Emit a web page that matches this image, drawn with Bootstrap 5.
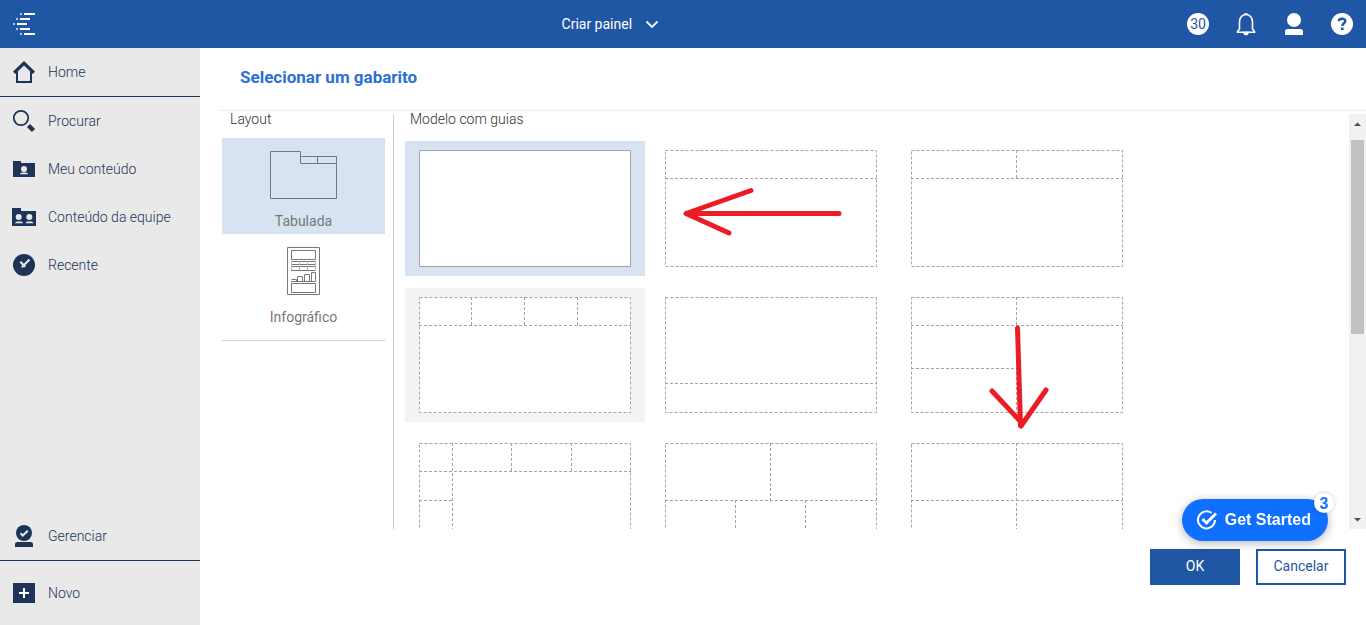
<!DOCTYPE html>
<html lang="pt-BR">
<head>
<meta charset="utf-8">
<meta name="viewport" content="width=device-width, initial-scale=1">
<title>Criar painel</title>
<link href="https://cdn.jsdelivr.net/npm/bootstrap@5.3.0/dist/css/bootstrap.min.css" rel="stylesheet">
<style>
  :root { --brand: #1f57a4; --ink: #1d3458; --pick: #d8e3f1; --line: #a3a3a3; }
  body { font-family: Roboto, "Noto Sans", sans-serif; font-size: 14px; font-weight: 300; line-height: 20px; color: #323232; }
  svg { display: block; flex: none; }
  .topbar { height: 48px; background: var(--brand); display: grid; grid-template-columns: 4fr auto 5fr; }
  .topbar button, .thumb, .layout-item { border: 0; background: none; padding: 0; }
  .brand-mark { width: 32px; }
  .menu-label { font-weight: 400; }
  .tools { padding-right: 12px; }
  .topbar .count { width: 22px; height: 22px; margin-right: 1px; background: #fff; color: var(--brand); }
  .side { width: 200px; background: #e9e9e9; }
  .side a { height: 48px; padding: 0 12px; gap: 12px; color: var(--ink); text-decoration: none; }
  .side .rule-below { height: 49px; border-bottom: 1px solid var(--ink); }
  .side .new-item { height: 64px; }
  .page-title { font-size: 17px; line-height: 24px; font-weight: 700; color: #2a70d6; padding: 17px 0 21px; margin: 0 0 0 20px; }
  .title-box { border-bottom: 1px solid #ececec; margin-left: 20px; }
  .picker { margin: 3px 0 0 22px; min-height: 0; }
  .layouts { width: 172px; border-right: 1px solid #d0d0d0; padding-right: 8px; }
  .col-label { line-height: 16px; margin: -3px 0 0; }
  .layouts .col-label { padding-left: 8px; margin-bottom: 11px; }
  .layout-item { height: 96px; width: 100%; color: #777; padding: 12px 0 3px; }
  .layout-item.chosen { background: var(--pick); }
  .layout-list { padding-bottom: 10px; border-bottom: 1px solid #d0d0d0; }
  .models { padding-left: 11px; }
  .models .col-label { padding-left: 5px; margin-bottom: 14px; }
  .thumb-grid { display: grid; grid-template-columns: repeat(auto-fill, 240px); gap: 12px 6px; position: relative; max-width: 744px; }
  .thumb { padding: 9px 14px; align-self: start; }
  .thumb svg { background: #fff; fill: none; stroke: var(--line); stroke-dasharray: 3 2; }
  .thumb.chosen { background: var(--pick); }
  .thumb.chosen svg { stroke-dasharray: none; }
  .thumb.hovered { background: #f3f3f3; }
  .marks { position: absolute; left: 0; top: 0; pointer-events: none; }
  .scroller { width: 17px; background: #f1f1f1; }
  .scroller i { width: 13px; height: 194px; margin: 9px 0 auto; background: #c1c1c1; }
  .actions { padding: 20px 20px 40px; gap: 16px; }
  .action { width: 90px; height: 36px; border: 2px solid var(--brand); border-radius: 0; font-size: 14px; font-weight: 400; line-height: 20px; padding: 4px 0 6px; color: var(--brand); background: #fff; }
  .action.main { background: var(--brand); color: #fff; }
  .starter { right: 38px; bottom: 84px; height: 42px; padding: 0 17px 0 14px; gap: 7px; border: 0; background: #0f6fff; color: #fff; font: bold 16px/20px "Liberation Sans", Arial, sans-serif; box-shadow: 0 2px 10px rgba(0,0,0,.3); }
  .starter-count { right: -6px; top: -6px; width: 20px; height: 20px; line-height: 22px; background: #fff; color: #0f6fff; box-shadow: 0 0 5px rgba(0,0,0,.2); }
</style>
<script src="https://cdn.jsdelivr.net/npm/bootstrap@5.3.0/dist/js/bootstrap.bundle.min.js"></script>
</head>
<body class="vh-100 d-flex flex-column overflow-hidden">
<header class="topbar align-items-center text-white flex-shrink-0">
  <button type="button" class="brand-mark ms-2" aria-label="Início">
    <svg width="32" height="24" viewBox="8 12 32 24" stroke="#fff" stroke-width="2"><path d="M24 14h11M20 19h10M17 24h10M20 29h10M24 34h11"/><path stroke="#b9cbe4" d="M20 14h2M16 19h2M13 24h2M16 29h2M20 34h2"/></svg>
  </button>
  <button type="button" class="menu-label text-white d-flex align-items-center">
    <span>Criar painel</span>
    <svg class="ms-2" width="24" height="20" viewBox="0 0 24 20" fill="none" stroke="#fff" stroke-width="1.800"><path d="M6.500 7.500 12 13l5.500-5.500"/></svg>
  </button>
  <div class="tools d-flex justify-content-end align-items-center gap-4">
    <button type="button" class="count rounded-circle">30</button>
    <button type="button" aria-label="Notificações"><svg width="24" height="24" viewBox="0 0 24 24" fill="none" stroke="#fff" stroke-width="1.600"><path d="M3.500 20.200v-.700l2-2.500V10c0-4.500 3-7.500 6.500-7.500s6.500 3 6.500 7.500v7l2 2.500v.700z"/><path d="M9.500 20.500h5L13 22.500h-2zM10.500 2h3" fill="#fff"/></svg></button>
    <button type="button" aria-label="Conta"><svg width="24" height="24" viewBox="0 0 24 24" fill="#fff"><circle cx="12" cy="8" r="7"/><path d="M3 23v-3.500Q3 17 5.500 17h13q2.500 0 2.500 2.500V23z"/></svg></button>
    <button type="button" aria-label="Ajuda"><svg width="24" height="24" viewBox="0 0 24 24"><circle cx="12" cy="12" r="11" fill="#fff"/><path d="M8.800 9.300C8.800 7.500 10 6.700 12 6.700s3.300 1 3.300 2.600c0 2.100-3 2-3 4.700" fill="none" stroke="#1f57a4" stroke-width="2.400"/><path d="M11 15.500h2.600v2.600H11z" fill="#1f57a4"/></svg></button>
  </div>
</header>

<div class="d-flex flex-grow-1 overflow-hidden">
  <nav class="side d-flex flex-column flex-shrink-0" aria-label="Principal">
    <a href="#" class="d-flex align-items-center rule-below"><svg width="24" height="24" viewBox="0 0 24 24"><path d="M5 10v12h14V10" fill="none" stroke="#1d3458" stroke-width="2"/><path d="M12 1 23 11.500 21 14l-9-8.500L3 14l-2-2.500z" fill="#1d3458"/></svg>Home</a>
    <a href="#" class="d-flex align-items-center"><svg width="24" height="24" viewBox="0 0 24 24" fill="none" stroke="#1d3458"><circle cx="9" cy="9" r="7.200" stroke-width="1.800"/><path d="m16.500 16.500 5 5" stroke-width="4.500"/></svg>Procurar</a>
    <a href="#" class="d-flex align-items-center"><svg width="24" height="24" viewBox="0 0 24 24"><path d="M1 4h8v2h14v14H1z" fill="#1d3458"/><g fill="#e9e9e9"><circle cx="12" cy="12" r="3"/><path d="M8 17.300Q8.500 15.500 10 15.500h4q1.500 0 2 1.800z"/></g></svg>Meu conteúdo</a>
    <a href="#" class="d-flex align-items-center"><svg width="24" height="24" viewBox="0 0 24 24"><path d="M0 3h9v3h15v15H0z" fill="#1d3458"/><g fill="#e9e9e9"><circle cx="6.700" cy="12" r="3"/><circle cx="17.300" cy="12" r="3"/><path d="M3 18.200Q3.500 16.500 5 16.500h4q1.500 0 2 1.700zM13.500 18.200q.500-1.700 2-1.700h4q1.500 0 2 1.700z"/></g></svg>Conteúdo da equipe</a>
    <a href="#" class="d-flex align-items-center"><svg width="24" height="24" viewBox="0 0 24 24"><circle cx="12" cy="12" r="11" fill="#1d3458"/><path d="m17.500 6.500-7.700 7.800M8.300 8.800l5 5" stroke="#e9e9e9" stroke-width="2"/></svg>Recente</a>
    <a href="#" class="d-flex align-items-center rule-below mt-auto"><svg width="24" height="24" viewBox="0 0 24 24"><circle cx="12" cy="9" r="8" fill="#1d3458"/><path d="M3 23v-3q0-2 2.500-2h13q2.500 0 2.500 2v3z" fill="#1d3458"/><path d="m8.500 9.200 2.300 2.300 5-4.800" fill="none" stroke="#e9e9e9" stroke-width="2"/></svg>Gerenciar</a>
    <a href="#" class="d-flex align-items-center new-item"><svg width="24" height="24" viewBox="0 0 24 24"><path d="M1 2h22v20H1z" fill="#1d3458"/><path d="M12 7v10M7 12h10" stroke="#fff" stroke-width="2"/></svg>Novo</a>
  </nav>

  <main class="d-flex flex-column flex-grow-1 overflow-hidden">
    <div class="title-box"><h1 class="page-title">Selecionar um gabarito</h1></div>
    <div class="picker d-flex flex-grow-1">
      <section class="layouts flex-shrink-0">
        <p class="col-label">Layout</p>
        <div class="layout-list">
          <button type="button" class="layout-item chosen d-flex flex-column align-items-center justify-content-between">
            <svg width="68" height="50" viewBox="0 0 68 50" fill="none" stroke="#777" stroke-width="1"><path d="M.500 1.500h30v12h36v35H.500zM30.500 6.500h36v7M47.500 6.500v7"/></svg>Tabulada</button>
          <button type="button" class="layout-item d-flex flex-column align-items-center justify-content-between">
            <svg width="33" height="50" viewBox="0 0 33 50" fill="none" stroke="#777"><path d="M.500 1.500h32v47H.500zM4.500 4.500h24v9h-24zM4.500 37.500h24v9h-24z"/><path d="M4 15.500h24.500M4 18.500h24.500M4 20.500h24.500M4 24.500h24.500M4 35.500h24.500M4.500 33.500h5v2M10.500 35v-4.500h5V35M17.500 35v-6.500h5V35M24.500 35v-8.500h4V35"/><path stroke="#b9b9b9" d="M4.500 15v9M12.500 15v9M20.500 15v9M28.500 15v9"/></svg>Infográfico</button>
        </div>
      </section>
      <section class="models d-flex flex-column flex-grow-1">
        <p class="col-label">Modelo com guias</p>
        <div class="overflow-hidden flex-grow-1">
        <div class="thumb-grid">
          <button type="button" class="thumb chosen" aria-label="Modelo 1"><svg width="212" height="117"><path d="M.500.500h211v116H.500z"/></svg></button>
          <button type="button" class="thumb" aria-label="Modelo 2"><svg width="212" height="117"><path d="M.500.500h211v116H.500zM0 28.500h212"/></svg></button>
          <button type="button" class="thumb" aria-label="Modelo 3"><svg width="212" height="117"><path d="M.500.500h211v116H.500zM0 28.500h212M105.500 0v28"/></svg></button>
          <button type="button" class="thumb hovered" aria-label="Modelo 4"><svg width="212" height="116"><path d="M.500.500h211v115H.500zM0 28.500h212M52.500 0v28M105.500 0v28M158.500 0v28"/></svg></button>
          <button type="button" class="thumb" aria-label="Modelo 5"><svg width="212" height="116"><path d="M.500.500h211v115H.500zM0 86.500h212"/></svg></button>
          <button type="button" class="thumb" aria-label="Modelo 6"><svg width="212" height="116"><path d="M.500.500h211v115H.500zM0 28.500h212M105.500 0v116M0 71.500h105"/></svg></button>
          <button type="button" class="thumb" aria-label="Modelo 7"><svg width="212" height="117"><path d="M.500.500h211v116H.500zM0 28.500h212M33.500 0v116M92.500 0v28M152.500 0v28M0 57.500h33"/></svg></button>
          <button type="button" class="thumb" aria-label="Modelo 8"><svg width="212" height="117"><path d="M.500.500h211v116H.500zM0 57.500h212M105.500 0v57M70.500 57v60M140.500 57v60"/></svg></button>
          <button type="button" class="thumb" aria-label="Modelo 9"><svg width="212" height="117"><path d="M.500.500h211v116H.500zM0 57.500h212M105.500 0v117"/></svg></button>
          <svg class="marks" width="732" height="300" fill="none" stroke="#ed1c24" stroke-width="5" stroke-linecap="round" stroke-linejoin="round"><path d="M434 72.500H281L346 49.500M281 72.500 324 92M612.500 187l3 98M587 250l29 31M641 249l-25 36"/></svg>
        </div>
        </div>
      </section>
      <div class="scroller d-flex flex-column align-items-center flex-shrink-0" aria-hidden="true">
        <svg class="mt-2" width="9" height="9" viewBox="0 0 9 9"><path d="M1 4 4.500.500 8 4z" fill="#505050"/></svg>
        <i></i>
        <svg class="mb-1" width="9" height="9" viewBox="0 0 9 9"><path d="M1 2h7L4.500 5.500z" fill="#505050"/></svg>
      </div>
    </div>
    <div class="actions d-flex justify-content-end flex-shrink-0">
      <button type="button" class="btn action main">OK</button>
      <button type="button" class="btn action">Cancelar</button>
    </div>
  </main>
</div>

<button type="button" class="starter position-fixed rounded-pill d-flex align-items-center">
  <svg width="22" height="22" viewBox="0 0 22 22" fill="none" stroke="#fff" stroke-width="2"><path d="M15.500 4A8.500 8.500 0 1 0 19 11"/><path d="m6.500 10 4 4L20 4.500" stroke-width="3"/></svg>
  Get Started
  <span class="starter-count position-absolute rounded-circle text-center">3</span>
</button>
</body>
</html>
